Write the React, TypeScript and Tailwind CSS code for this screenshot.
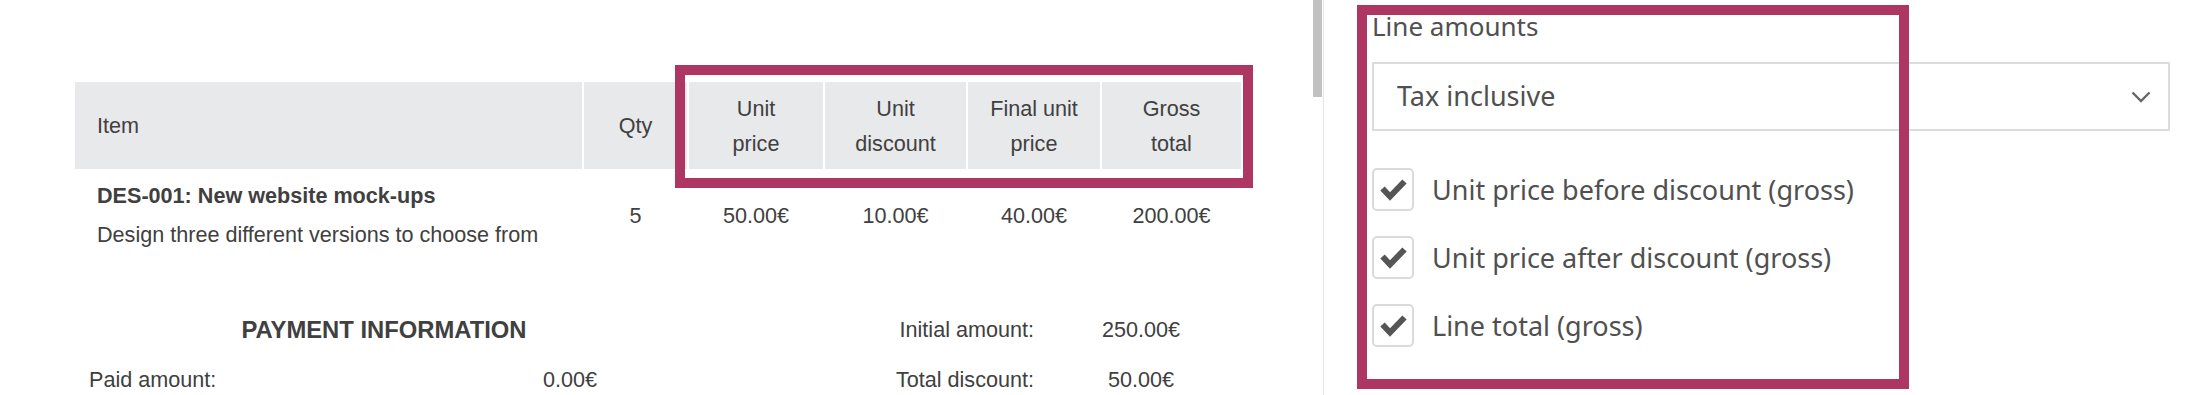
import React from 'react';

const columns = [
    { label: ['Item'], align: 'left' },
    { label: ['Qty'], align: 'center' },
    { label: ['Unit', 'price'], align: 'center' },
    { label: ['Unit', 'discount'], align: 'center' },
    { label: ['Final unit', 'price'], align: 'center' },
    { label: ['Gross', 'total'], align: 'center' },
];

const options = [
    'Unit price before discount (gross)',
    'Unit price after discount (gross)',
    'Line total (gross)',
];

function CheckIcon() {
    return (
        <svg width="27" height="23" viewBox="0 0 27 23" fill="none">
            <path d="M2.5 10.5 L10 18.5 L24.5 3.5" stroke="#555555" strokeWidth="6" strokeLinejoin="miter" />
        </svg>
    );
}

function Chevron() {
    return (
        <svg width="20" height="12" viewBox="0 0 20 12" fill="none">
            <path d="M1.5 1.5 L10 10 L18.5 1.5" stroke="#666666" strokeWidth="2.4" />
        </svg>
    );
}

export default function App() {
    return (
        <div className="flex w-[2199px] h-[395px] overflow-hidden bg-white">
            {/* invoice preview */}
            <div className="relative w-[1313px] shrink-0 pt-[82px] pl-[75px] text-[#404040] font-['Liberation_Sans',Arial,sans-serif] text-[21.6px]">
                <div className="grid grid-cols-[507px_103px_134px_141px_132px_139px] gap-x-[2px]">
                    {columns.map((c, i) => (
                        <div
                            key={i}
                            className={`h-[87px] bg-[#e8e9eb] flex flex-col justify-center leading-[35px] ${c.align === 'left' ? 'items-start pl-[22px]' : 'items-center text-center'}`}
                        >
                            {c.label.map((l) => (
                                <span key={l}>{l}</span>
                            ))}
                        </div>
                    ))}

                    <div className="pt-[7px] pb-[7px] pl-[22px] leading-[39px]">
                        <div className="font-bold">DES-001: New website mock-ups</div>
                        <div>Design three different versions to choose from</div>
                    </div>
                    <div className="flex items-center justify-center leading-[39px]">5</div>
                    <div className="flex items-center justify-center leading-[39px]">50.00€</div>
                    <div className="flex items-center justify-center leading-[39px]">10.00€</div>
                    <div className="flex items-center justify-center leading-[39px]">40.00€</div>
                    <div className="flex items-center justify-center leading-[39px]">200.00€</div>
                </div>

                <div className="mt-[44px] grid grid-cols-[618px_341px_214px] leading-[50px]">
                    <div className="text-center font-bold text-[23.8px]">PAYMENT INFORMATION</div>
                    <div className="text-right">Initial amount:</div>
                    <div className="text-center">250.00€</div>

                    <div className="flex justify-between pl-[14px] pr-[96px]">
                        <span>Paid amount:</span>
                        <span>0.00€</span>
                    </div>
                    <div className="text-right">Total discount:</div>
                    <div className="text-center">50.00€</div>
                </div>

                {/* highlight */}
                <div className="absolute left-[675px] top-[65px] w-[578px] h-[123px] border-[10px] border-[#ad3762]" />
            </div>

            {/* scrollbar */}
            <div className="w-[10px] shrink-0">
                <div className="w-[9px] h-[97px] bg-[#c1c1c1]" />
            </div>

            {/* settings panel */}
            <div className="relative flex-1 border-l border-[#e6e6e6] pl-[48px] pt-[10px] text-[#505050] font-['Noto_Sans',sans-serif]">
                <div className="text-[26px] leading-[33px]">Line amounts</div>

                <div className="mt-[19px] w-[798px] h-[69px] border-2 border-[#dcdce0] flex items-center justify-between pl-[23px] pr-[17px]">
                    <span className="text-[27px]">Tax inclusive</span>
                    <Chevron />
                </div>

                <div className="mt-[37px] flex flex-col gap-[25px]">
                    {options.map((o) => (
                        <div key={o} className="flex items-center gap-[18px]">
                            <div className="w-[42px] h-[43px] rounded-[5px] border-2 border-[#dadada] flex items-center justify-center">
                                <CheckIcon />
                            </div>
                            <span className="text-[27px] leading-[43px]">{o}</span>
                        </div>
                    ))}
                </div>

                {/* highlight */}
                <div className="absolute left-[33px] top-[5px] w-[552px] h-[384px] border-[10px] border-[#ad3762]" />
            </div>
        </div>
    );
}
